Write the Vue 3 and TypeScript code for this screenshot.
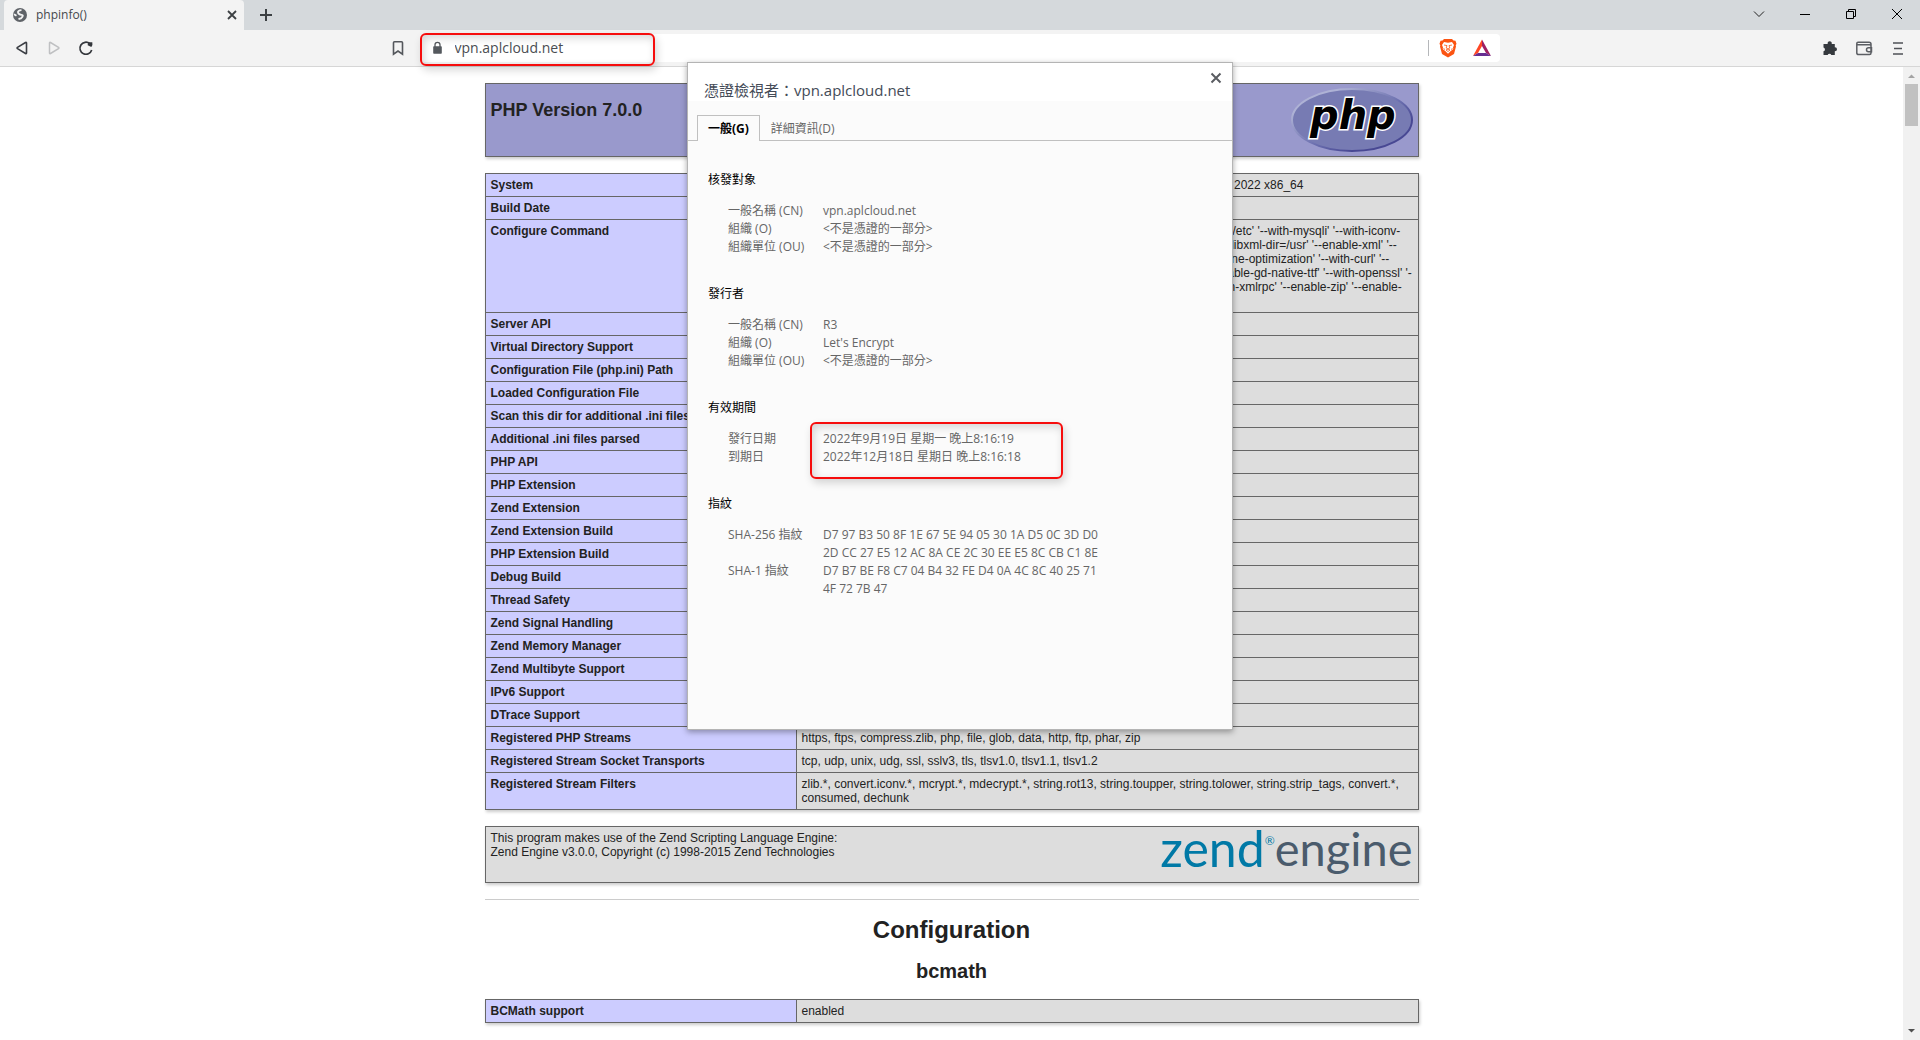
<script setup lang="ts">
import { ref } from 'vue'

interface InfoRow {
  name: string
  value?: string
}
interface CertField {
  label: string
  value: string
}
interface CertSection {
  title: string
  fields: CertField[]
  marked?: boolean
}

const address = ref('vpn.aplcloud.net')

const configureCommand =
  "'./configure' '--prefix=/usr/local/web/php' '--with-config-file-path=/usr/local/web/php/etc' '--with-mysqli' '--with-iconv-dir' '--with-freetype-dir' '--with-jpeg-dir=/usr' '--with-png-dir=/usr' '--with-zlib' '--with-libxml-dir=/usr' '--enable-xml' '--disable-rpath' '--enable-bcmath' '--enable-shmop' '--enable-sysvsem' '--enable-inline-optimization' '--with-curl' '--enable-mbregex' '--enable-mbstring' '--enable-posix' '--enable-ftp' '--with-gd' '--enable-gd-native-ttf' '--with-openssl' '--with-mhash' '--enable-pcntl' '--enable-sockets' '--enable-fpm' '--with-mcrypt' '--with-xmlrpc' '--enable-zip' '--enable-soap'"

const rows: InfoRow[] = [
  { name: 'System', value: 'Linux vpn.aplcloud.net 3.10.0-957.el7.x86_64 #1 SMP Wed Jul 10 16:21:17 UTC 2022 x86_64' },
  { name: 'Build Date' },
  { name: 'Configure Command', value: configureCommand },
  { name: 'Server API' },
  { name: 'Virtual Directory Support' },
  { name: 'Configuration File (php.ini) Path' },
  { name: 'Loaded Configuration File' },
  { name: 'Scan this dir for additional .ini files' },
  { name: 'Additional .ini files parsed' },
  { name: 'PHP API' },
  { name: 'PHP Extension' },
  { name: 'Zend Extension' },
  { name: 'Zend Extension Build' },
  { name: 'PHP Extension Build' },
  { name: 'Debug Build' },
  { name: 'Thread Safety' },
  { name: 'Zend Signal Handling' },
  { name: 'Zend Memory Manager' },
  { name: 'Zend Multibyte Support' },
  { name: 'IPv6 Support' },
  { name: 'DTrace Support' },
  { name: 'Registered PHP Streams', value: 'https, ftps, compress.zlib, php, file, glob, data, http, ftp, phar, zip' },
  { name: 'Registered Stream Socket Transports', value: 'tcp, udp, unix, udg, ssl, sslv3, tls, tlsv1.0, tlsv1.1, tlsv1.2' },
  {
    name: 'Registered Stream Filters',
    value: 'zlib.*, convert.iconv.*, mcrypt.*, mdecrypt.*, string.rot13, string.toupper, string.tolower, string.strip_tags, convert.*, consumed, dechunk',
  },
]

const sections: CertSection[] = [
  {
    title: '核發對象',
    fields: [
      { label: '一般名稱 (CN)', value: 'vpn.aplcloud.net' },
      { label: '組織 (O)', value: '<不是憑證的一部分>' },
      { label: '組織單位 (OU)', value: '<不是憑證的一部分>' },
    ],
  },
  {
    title: '發行者',
    fields: [
      { label: '一般名稱 (CN)', value: 'R3' },
      { label: '組織 (O)', value: "Let's Encrypt" },
      { label: '組織單位 (OU)', value: '<不是憑證的一部分>' },
    ],
  },
  {
    title: '有效期間',
    marked: true,
    fields: [
      { label: '發行日期', value: '2022年9月19日 星期一 晚上8:16:19' },
      { label: '到期日', value: '2022年12月18日 星期日 晚上8:16:18' },
    ],
  },
  {
    title: '指紋',
    fields: [
      { label: 'SHA-256 指紋', value: 'D7 97 B3 50 8F 1E 67 5E 94 05 30 1A D5 0C 3D D0\n2D CC 27 E5 12 AC 8A CE 2C 30 EE E5 8C CB C1 8E' },
      { label: 'SHA-1 指紋', value: 'D7 B7 BE F8 C7 04 B4 32 FE D4 0A 4C 8C 40 25 71\n4F 72 7B 47' },
    ],
  },
]
</script>

<template>
  <div class="browser">
    <header class="tabstrip">
      <div class="tab">
        <svg class="i16" viewBox="0 0 16 16">
          <circle cx="8" cy="8" r="7" fill="#5f6368" />
          <path d="M9.500 3.200Q5.500 3.500 6 5.500T9.500 7.800T8.800 11.500L6.500 12M2 7.200L4.500 8.800" fill="none" stroke="#f3f3f3" stroke-width="1.800" />
        </svg>
        <span class="tab-title">phpinfo()</span>
        <button class="plain" aria-label="Close tab">
          <svg class="i16" viewBox="0 0 16 16"><path d="M4 4l8 8M12 4l-8 8" stroke="#3c4043" stroke-width="1.800" /></svg>
        </button>
      </div>
      <button class="plain new-tab" aria-label="New tab">
        <svg class="i16" viewBox="0 0 16 16"><path d="M8 2v12M2 8h12" stroke="#3c4043" stroke-width="2" /></svg>
      </button>
      <div class="window-buttons">
        <button class="plain" aria-label="Search tabs">
          <svg class="i16" viewBox="0 0 16 16"><path d="M3 5.500l5 5 5-5" fill="none" stroke="#222" /></svg>
        </button>
        <button class="plain" aria-label="Minimize">
          <svg class="i16" viewBox="0 0 16 16"><path d="M3 8.500h10" stroke="#000" /></svg>
        </button>
        <button class="plain" aria-label="Restore">
          <svg class="i16" viewBox="0 0 16 16"><path d="M3.500 5.500h7v7h-7zM5.500 5.500v-2h7v7h-2" fill="none" stroke="#000" /></svg>
        </button>
        <button class="plain" aria-label="Close window">
          <svg class="i16" viewBox="0 0 16 16"><path d="M3 3l10 10M13 3l-10 10" stroke="#000" /></svg>
        </button>
      </div>
    </header>

    <nav class="toolbar">
      <div class="nav-left">
        <button class="plain" aria-label="Back">
          <svg class="i16" viewBox="0 0 16 16"><path d="M12.500 3v10q0 1-1 .5L3.500 8.700q-.8-.7 0-1.400L11.500 2.500q1-.5 1 .5z" fill="none" stroke="#3b3e44" stroke-width="1.600" /></svg>
        </button>
        <button class="plain" aria-label="Forward">
          <svg class="i16" viewBox="0 0 16 16"><path d="M3.500 3v10q0 1 1 .5L12.500 8.700q.8-.7 0-1.400L4.500 2.500q-1-.5-1 .5z" fill="none" stroke="#bfc0c2" stroke-width="1.500" /></svg>
        </button>
        <button class="plain" aria-label="Reload">
          <svg class="i16" viewBox="0 0 16 16"><path d="M11.800 3.600A6 6 0 1 0 13.700 10" fill="none" stroke="#34373c" stroke-width="1.700" /><path d="M10 2.200h4.300q.7 2.600-1 4.800L9.700 5.200z" fill="#34373c" /></svg>
        </button>
        <button class="plain bookmark" aria-label="Bookmark">
          <svg class="i16" viewBox="0 0 16 16"><path d="M4.500 1.800h7q1 0 1 1v11.400L8 11l-4.500 3.200V2.800q0-1 1-1z" fill="none" stroke="#54575c" stroke-width="1.600" /></svg>
        </button>
      </div>
      <div class="address">
        <svg class="i16" viewBox="0 0 16 16"><path d="M5 6.200h7q.8 0 .8.8v6q0 .8-.8.800H5q-.8 0-.8-.8V7q0-.8.8-.800z" fill="#54585d" /><path d="M6 7V4.800a2.500 2.500 0 0 1 5 0V7" fill="none" stroke="#54585d" stroke-width="1.300" /></svg>
        <input v-model="address" class="address-input" type="text" aria-label="Address" />
        <span class="divider"></span>
        <button class="plain" aria-label="Brave Shields">
          <svg class="i20" viewBox="0 0 20 20">
            <path d="M6 1h8l1.500 1.500 2 .2 1 3-.8 1.800.3 1-2 7.500L10 19.500 4 16 2 8.500l.3-1L1.500 5.700l1-3 2-.2z" fill="#fb5412" />
            <path d="M6 4l4 .7L14 4l2 3-1 2.500.3 1.500-2.800 2.200L10 15.800l-2.500-2.600L4.700 11 5 9.500 4 7z" fill="#fff" />
            <path d="M6 7l3 .6-.8 2.400 1.800 1 1.800-1L11 7.600 14 7M8 12l2-1 2 1-2 1.500zM5.500 10.500l1.500 1M14.500 10.500l-1.500 1" fill="none" stroke="#fb5412" stroke-width="0.800" />
          </svg>
        </button>
        <button class="plain bat" aria-label="Brave Rewards">
          <svg class="i20" viewBox="0 0 20 20">
            <path d="M10 1.500L1 18l5-3 4-7z" fill="#ff4724" />
            <path d="M10 1.500L19 18l-5-3-4-7z" fill="#9e1f63" />
            <path d="M1 18h18l-5-3H6z" fill="#662d91" />
          </svg>
        </button>
        <span class="mark mark-address"></span>
      </div>
      <div class="nav-right">
        <button class="plain" aria-label="Extensions">
          <svg class="i16" viewBox="0 0 16 16"><path d="M1.500 4h4.200a2.100 2.100 0 1 1 4 0h3.100v3.300h.2a2 2 0 0 1 0 4h-.2V15H9.300a1.900 1.900 0 0 0-3.600 0H1.500v-3.700a1.900 1.900 0 0 0 0-3.700z" fill="#35393e" /></svg>
        </button>
        <button class="plain" aria-label="Wallet">
          <svg class="i20" viewBox="0 0 20 20"><path d="M4 4.200h11q2 0 2 2V15q0 1.500-1.500 1.500h-11Q2.800 16.500 2.800 15V5.400q0-1.200 1.200-1.200zM3 6.800h12.500q1.500 0 1.500 1M17.500 9.800h-3a2 2 0 0 0 0 4h3z" fill="none" stroke="#5b5e63" stroke-width="1.500" /></svg>
        </button>
        <button class="plain" aria-label="Menu">
          <svg class="i16" viewBox="0 0 16 16"><path d="M3 3h10M4 8.500h8M3 14h10" stroke="#4f5257" stroke-width="1.700" /></svg>
        </button>
      </div>
    </nav>

    <div class="viewport">
      <main class="page">
        <div class="info-head">
          <h1>PHP Version 7.0.0</h1>
          <svg class="php-logo" viewBox="0 0 122 64" role="img" aria-label="PHP logo">
            <defs>
              <linearGradient id="rim" x1="0" y1="0" x2="1" y2="1">
                <stop offset="0.200" stop-color="#aeb2d5" />
                <stop offset="0.550" stop-color="#6a6eae" />
                <stop offset="0.750" stop-color="#484893" />
              </linearGradient>
            </defs>
            <ellipse cx="61" cy="32" rx="60" ry="31" fill="#777bb3" stroke="url(#rim)" stroke-width="2" />
            <text x="19" y="41" class="php-word">php</text>
          </svg>
        </div>

        <table class="info">
          <tbody>
            <tr v-for="row in rows" :key="row.name">
              <th scope="row">{{ row.name }}</th>
              <td>{{ row.value }}</td>
            </tr>
          </tbody>
        </table>

        <div class="engine">
          <p>This program makes use of the Zend Scripting Language Engine:<br />Zend Engine v3.0.0, Copyright (c) 1998-2015 Zend Technologies</p>
          <div class="zend-logo"><span class="zend">zend</span><span class="reg">®</span><span>engine</span></div>
        </div>

        <hr />
        <h1 class="center">Configuration</h1>
        <h2>bcmath</h2>
        <table class="info">
          <tbody>
            <tr>
              <th scope="row">BCMath support</th>
              <td>enabled</td>
            </tr>
          </tbody>
        </table>
      </main>
      <div class="scrollbar">
        <svg viewBox="0 0 17 17"><path d="M5 11h7L8.500 7.500z" fill="#a3a3a3" /></svg>
        <div class="thumb"></div>
        <svg viewBox="0 0 17 17"><path d="M5 6h7L8.500 9.500z" fill="#505050" /></svg>
      </div>
    </div>

    <section class="dialog" role="dialog" aria-label="憑證檢視者">
      <div class="dialog-head">
        <h3>憑證檢視者：vpn.aplcloud.net</h3>
        <button class="plain" aria-label="Close">
          <svg class="i16" viewBox="0 0 16 16"><path d="M3.500 3.500l9 9M12.500 3.500l-9 9" stroke="#5a5d62" stroke-width="2" /></svg>
        </button>
      </div>
      <div class="dialog-tabs" role="tablist">
        <button class="dtab active" role="tab" aria-selected="true">一般(G)</button>
        <button class="dtab" role="tab" aria-selected="false">詳細資訊(D)</button>
      </div>
      <div class="dialog-body">
        <section v-for="s in sections" :key="s.title">
          <h4>{{ s.title }}</h4>
          <dl>
            <template v-for="f in s.fields" :key="f.label">
              <dt>{{ f.label }}</dt>
              <dd>{{ f.value }}</dd>
            </template>
            <span v-if="s.marked" class="mark mark-dates"></span>
          </dl>
        </section>
      </div>
    </section>
  </div>
</template>

<style>
body {
  margin: 0;
}
</style>

<style scoped>
.browser {
  position: relative;
  display: flex;
  flex-direction: column;
  height: 100vh;
  overflow: hidden;
  background: #fff;
  color: #222;
  font-family: "Liberation Sans", Arial, sans-serif;
}
.plain {
  display: flex;
  align-items: center;
  justify-content: center;
  padding: 0;
  border: 0;
  background: none;
}
.i16 {
  display: block;
  flex: none;
  width: 16px;
  height: 16px;
}
.i20 {
  display: block;
  flex: none;
  width: 20px;
  height: 20px;
}

.tabstrip {
  display: flex;
  flex: none;
  height: 30px;
  background: #d5d9dc;
}
.tab {
  display: flex;
  align-items: center;
  width: 240px;
  box-sizing: border-box;
  margin-left: 4px;
  padding: 0 4px 0 8px;
  border-radius: 4px 4px 0 0;
  background: #f3f3f3;
}
.tab-title {
  flex: 1;
  margin-left: 8px;
  color: #45484d;
  font: 12px/16px "Open Sans", sans-serif;
}
.new-tab {
  margin-left: 14px;
}
.window-buttons {
  display: flex;
  margin-left: auto;
}
.window-buttons .plain {
  width: 46px;
  height: 28px;
}

.toolbar {
  display: grid;
  grid-template-columns: 1fr minmax(0, 1079px) 1fr;
  flex: none;
  height: 36px;
  border-bottom: 1px solid #d6d6d6;
  background: #f3f3f3;
}
.nav-left {
  display: flex;
  align-items: center;
  gap: 16px;
  padding: 0 15px 0 14px;
}
.nav-left .bookmark {
  margin-left: auto;
}
.nav-right {
  display: flex;
  align-items: center;
  justify-content: flex-end;
  gap: 16px;
  padding-right: 14px;
}
.address {
  position: relative;
  display: flex;
  align-items: center;
  height: 28px;
  box-sizing: border-box;
  margin-top: 4px;
  padding: 0 8px;
  border-radius: 4px;
  background: #fff;
}
.address-input {
  flex: 1;
  min-width: 0;
  margin-left: 10px;
  padding: 0;
  border: 0;
  outline: 0;
  background: none;
  color: #4a4d52;
  font: 14px/20px "Open Sans", sans-serif;
}
.divider {
  width: 1px;
  height: 16px;
  margin-right: 9px;
  background: #b5b7ba;
}
.bat {
  margin-left: 14px;
}
.mark {
  position: absolute;
  box-sizing: border-box;
  border: 2px solid #f60d0d;
  border-radius: 6px;
  box-shadow: 2px 4px 8px rgba(0, 0, 0, 0.16), inset 2px 3px 8px rgba(0, 0, 0, 0.16);
  pointer-events: none;
}
.mark-address {
  top: -1px;
  left: -1px;
  width: 235px;
  height: 33px;
}
.mark-dates {
  top: -8px;
  left: 82px;
  width: 253px;
  height: 57px;
}

.viewport {
  display: flex;
  flex: 1;
  min-height: 0;
}
.page {
  flex: 1;
  padding-top: 16px;
  overflow: hidden;
}
.page > * {
  width: 934px;
  max-width: 100%;
  box-sizing: border-box;
  margin: 0 auto 16px;
}
.info-head,
.engine {
  display: flex;
  justify-content: space-between;
  border: 1px solid #666;
  box-shadow: 1px 2px 3px #ccc;
}
.info-head {
  padding: 4px 5px;
  background: #9999cc;
}
.info-head h1 {
  margin: 12px 0;
  font-size: 18px;
  line-height: 20px;
}
.php-logo {
  display: block;
  flex: none;
  width: 122px;
  height: 64px;
}
.php-word {
  font: italic bold 40px "DejaVu Sans", sans-serif;
  fill: #000;
  stroke: #fff;
  stroke-width: 3px;
  paint-order: stroke;
}
.info {
  border-collapse: collapse;
  box-shadow: 1px 2px 3px #ccc;
}
.info th,
.info td {
  padding: 4px 5px;
  border: 1px solid #666;
  font-size: 12px;
  line-height: 14px;
  text-align: left;
  vertical-align: top;
}
.info th {
  width: 300px;
  background: #ccccff;
  white-space: nowrap;
}
.info td {
  background: #ddd;
}
.engine {
  height: 57px;
  padding: 4px 5px;
  background: #ddd;
}
.engine p {
  margin: 0;
  font-size: 12px;
  line-height: 14px;
}
.zend-logo {
  display: flex;
  color: #4a5b6c;
  font: 47px/34px Lato, sans-serif;
}
.zend {
  font-size: 50px;
  color: #0079a6;
}
.reg {
  font-size: 12px;
  line-height: 20px;
  color: #0079a6;
}
hr {
  height: 1px;
  border: 0;
  background: #ccc;
}
.page > .center {
  margin-bottom: 15px;
  font-size: 24px;
  line-height: 28px;
  text-align: center;
}
.page > h2 {
  font-size: 20px;
  line-height: 24px;
  text-align: center;
}

.scrollbar {
  display: flex;
  flex-direction: column;
  width: 17px;
  background: #f1f1f1;
}
.scrollbar svg {
  width: 17px;
  height: 17px;
}
.thumb {
  height: 42px;
  margin: 0 2px auto;
  background: #c1c1c1;
}

.dialog {
  position: absolute;
  top: 62px;
  right: 0;
  left: 0;
  width: 546px;
  height: 668px;
  box-sizing: border-box;
  margin: 0 auto;
  border: 1px solid #b4b4b4;
  background: #fbfbfb;
  box-shadow: 0 2px 6px rgba(0, 0, 0, 0.35);
  font: 12px/18px "Open Sans", "Noto Sans CJK TC", sans-serif;
}
.dialog-head {
  display: flex;
  align-items: flex-start;
  justify-content: space-between;
  height: 38px;
  padding: 0 8px 0 16px;
  background: #fff;
}
.dialog-head h3 {
  margin: 16px 0 0;
  color: #444b57;
  font-size: 15px;
  font-weight: 400;
  line-height: 22px;
}
.dialog-head .plain {
  margin-top: 7px;
}
.dialog-tabs {
  display: flex;
  height: 39px;
  align-items: flex-end;
  padding-left: 9px;
  border-bottom: 1px solid #c0c0c0;
}
.dtab {
  height: 26px;
  box-sizing: border-box;
  margin-bottom: -1px;
  padding: 0 10px;
  border: 1px solid transparent;
  border-bottom: 0;
  background: none;
  color: #666;
  font: inherit;
}
.dtab.active {
  border-color: #c0c0c0;
  background: #fbfbfb;
  color: #000;
  font-weight: 700;
}
.dialog-body {
  display: flex;
  flex-direction: column;
  gap: 29px;
  padding: 30px 20px;
}
h4 {
  margin: 0 0 13px;
  color: #000;
  font-size: 12px;
  font-weight: 400;
}
dl {
  position: relative;
  display: grid;
  grid-template-columns: 95px 1fr;
  margin: 0 0 0 20px;
  color: #666;
}
dt,
dd {
  margin: 0;
  white-space: pre;
}
</style>
